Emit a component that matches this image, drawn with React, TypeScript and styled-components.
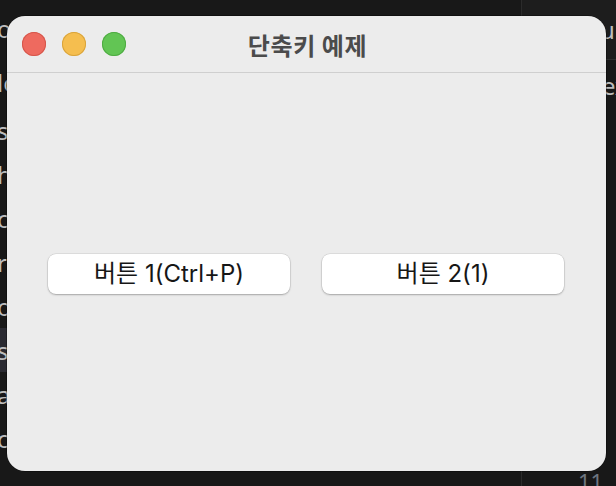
import React from "react";
import styled, { createGlobalStyle } from "styled-components";

const GlobalStyle = createGlobalStyle`
  html, body {
    margin: 0;
    padding: 0;
    background: #181818;
  }
  * { box-sizing: border-box; }
`;

const Desktop = styled.div`
  position: relative;
  width: 616px;
  height: 486px;
  overflow: hidden;
  display: grid;
  grid-template-columns: 521px 1fr;
  background: #181818;
  font-family: "Noto Sans", "Noto Sans CJK KR", sans-serif;
`;

const EditorPane = styled.div`
  display: flex;
  flex-direction: column;
  overflow: hidden;
`;

const TopBlock = styled.div`
  display: flex;
  flex-direction: column;
`;

const BgLine = styled.div<{ $h?: number; $active?: boolean }>`
  height: ${(p) => p.$h ?? 44}px;
  flex: none;
  display: flex;
  align-items: center;
  margin-left: -3px;
  font-size: 24px;
  color: #bdbdbd;
  white-space: nowrap;
  background: ${(p) => (p.$active ? "#2a2a31" : "transparent")};
`;

const SidePane = styled.div`
  border-left: 1px solid #2b2b2b;
  display: flex;
  flex-direction: column;
  overflow: hidden;
`;

const SideHeader = styled.div`
  height: 60px;
  flex: none;
  display: flex;
  align-items: center;
  padding-left: 78px;
  background: #1d1d1d;
  border-bottom: 1px solid #2e2e2e;
  font-size: 24px;
  color: #bdbdbd;
  white-space: nowrap;
`;

const SideBody = styled.div`
  padding-top: 3px;
  display: flex;
  flex-direction: column;
`;

const CodeRow = styled.div`
  height: 44px;
  flex: none;
  display: grid;
  grid-template-columns: 54px 22px 1fr;
  column-gap: 2px;
  align-items: center;
  white-space: nowrap;
`;

const LineNo = styled.span`
  grid-column: 2;
  text-align: right;
  font-size: 22px;
  color: #6e7681;
`;

const CodeText = styled.span`
  grid-column: 3;
  font-size: 24px;
  color: #bdbdbd;
`;

const Window = styled.div`
  position: absolute;
  left: 7px;
  top: 16px;
  width: 599px;
  height: 455px;
  border-radius: 18px;
  background: #ececec;
  overflow: hidden;
  display: flex;
  flex-direction: column;
  box-shadow: 0 0 0 0.5px rgba(0, 0, 0, 0.6);
`;

const TitleBar = styled.div`
  height: 57px;
  flex: none;
  display: grid;
  grid-template-columns: 1fr auto 1fr;
  align-items: center;
  padding: 0 15px;
  border-bottom: 1px solid #cfcfcf;
`;

const Lights = styled.div`
  display: flex;
  gap: 16px;
`;

const Light = styled.span<{ $c: string; $b: string }>`
  width: 24px;
  height: 24px;
  border-radius: 50%;
  background: ${(p) => p.$c};
  box-shadow: inset 0 0 0 1px ${(p) => p.$b};
`;

const Title = styled.div`
  font-family: "Noto Sans CJK KR", sans-serif;
  font-weight: 700;
  font-size: 24px;
  color: #4b4b4b;
  letter-spacing: 0.6px;
  padding-left: 2px;
`;

const Body = styled.div`
  flex: 1;
  display: flex;
  align-items: center;
  justify-content: center;
  gap: 32px;
  padding-top: 4px;
  padding-right: 1px;
`;

const Button = styled.button`
  width: 242px;
  height: 40px;
  border: none;
  border-radius: 8px;
  background: #ffffff;
  box-shadow: 0 0 0 0.5px rgba(0, 0, 0, 0.12), 0 1px 2px rgba(0, 0, 0, 0.25);
  font-family: "Inter", "Noto Sans CJK KR", sans-serif;
  font-size: 24px;
  line-height: 1;
  color: #161616;
  padding: 0;
  cursor: default;
`;

const leftLines = [
  { t: "st", a: false },
  { t: "hi", a: false },
  { t: "co", a: false },
  { t: "re", a: false },
  { t: "ob", a: false },
  { t: "st", a: true },
  { t: "ap", a: false },
  { t: "co", a: false },
];

const sideRows = ["2", "3", "4", "5", "6", "7", "8", "9", "10", "11"];

export default function App() {
  return (
    <>
      <GlobalStyle />
      <Desktop>
        <EditorPane>
          <TopBlock>
            <BgLine $h={56}>ok</BgLine>
            <BgLine $h={52}>lo</BgLine>
          </TopBlock>
          {leftLines.map((l, i) => (
            <BgLine key={i} $active={l.a}>
              {l.t}
            </BgLine>
          ))}
        </EditorPane>
        <SidePane>
          <SideHeader>ul</SideHeader>
          <SideBody>
            {sideRows.map((n, i) => (
              <CodeRow key={n}>
                <LineNo>{n}</LineNo>
                <CodeText>{i === 0 ? "export" : ""}</CodeText>
              </CodeRow>
            ))}
          </SideBody>
        </SidePane>
        <Window>
          <TitleBar>
            <Lights>
              <Light $c="#ee6a5f" $b="#d5574c" />
              <Light $c="#f5be4f" $b="#d9a43c" />
              <Light $c="#62c554" $b="#4fab43" />
            </Lights>
            <Title>단축키 예제</Title>
            <span />
          </TitleBar>
          <Body>
            <Button>버튼 1(Ctrl+P)</Button>
            <Button>버튼 2(1)</Button>
          </Body>
        </Window>
      </Desktop>
    </>
  );
}
